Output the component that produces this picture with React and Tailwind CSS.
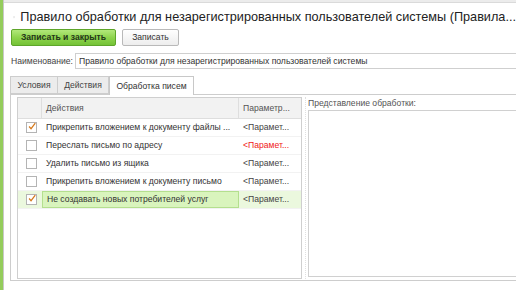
import { useState } from "react";

const rows = [
  { checked: true, name: "Прикрепить вложением к документу файлы ...", param: "<Парамет...", red: false },
  { checked: false, name: "Переслать письмо по адресу", param: "<Парамет...", red: true },
  { checked: false, name: "Удалить письмо из ящика", param: "<Парамет...", red: false },
  { checked: false, name: "Прикрепить вложением к документу письмо", param: "<Парамет...", red: false },
  { checked: true, name: "Не создавать новых потребителей услуг", param: "<Парамет...", red: false, selected: true },
];

function Check({ checked }) {
  return (
    <span className="w-[11px] h-[11px] border border-[#b4b4b4] bg-white flex items-center justify-center">
      {checked && (
        <svg width="11" height="11" viewBox="0 0 11 11" className="-mt-[3px] ml-[1px]">
          <path d="M1.5 5.5 L4.2 8.5 L10 0.8" stroke="#d67a1e" strokeWidth="1.7" fill="none" />
        </svg>
      )}
    </span>
  );
}

export default function App() {
  const [tab] = useState(2);
  const tabs = [
    { label: "Условия", w: "w-[48px]" },
    { label: "Действия", w: "w-[51px]" },
    { label: "Обработка писем", w: "w-[85px]" },
  ];

  return (
    <div className="flex w-[516px] h-[290px] overflow-hidden bg-white font-['Liberation_Sans',Arial,sans-serif] text-[8.6px] text-[#333]">
      {/* left edge of the outer app */}
      <div className="w-[3px] bg-[#94cc5c] shrink-0" />
      <div className="w-px bg-[#c8c8c8] shrink-0" />

      <div className="flex-1 flex flex-col min-w-0">
        <div className="h-[3px] bg-[#ececec] border-b border-[#dadada] shrink-0" />

        {/* Title */}
        <div className="h-[25px] pt-[3px] flex items-center pl-[9px] shrink-0">
          <svg width="12" height="12" viewBox="0 0 12 12" className="mr-[5px] -mt-[1px]">
            <path
              d="M6 0.8 L7.5 4.4 L11.3 4.6 L8.4 7.1 L9.3 10.9 L6 8.8 L2.7 10.9 L3.6 7.1 L0.7 4.6 L4.5 4.4 Z"
              fill="none"
              stroke="#b5b5b5"
              strokeWidth="0.9"
              strokeLinejoin="round"
            />
          </svg>
          <span className="text-[12.7px] text-[#222] whitespace-nowrap leading-none">
            Правило обработки для незарегистрированных пользователей системы (Правила...
          </span>
        </div>

        {/* Buttons */}
        <div className="flex gap-[6px] pl-[7px] mt-[1px] shrink-0">
          <button className="h-[17px] w-[105px] rounded-[2px] border border-[#5ea52a] bg-gradient-to-b from-[#b2e87a] via-[#8ed44c] to-[#74c236] font-bold text-[8.6px] text-[#24361a] leading-none whitespace-nowrap">
            Записать и закрыть
          </button>
          <button className="h-[17px] w-[57px] rounded-[2px] border border-[#b9b9b9] bg-gradient-to-b from-white to-[#ededed] text-[8.6px] text-[#333] leading-none">
            Записать
          </button>
        </div>

        {/* Name */}
        <div className="flex items-center pl-[7px] mt-[7px] shrink-0">
          <span className="text-[#444] w-[64px] whitespace-nowrap">Наименование:</span>
          <div className="flex-1 h-[16px] border border-[#cfcfcf] border-r-0 flex items-center pl-[3px] whitespace-nowrap overflow-hidden text-[#333]">
            Правило обработки для незарегистрированных пользователей системы
          </div>
        </div>

        {/* Tab panel */}
        <div className="flex flex-col ml-[6px] mt-[6px] flex-1 min-h-0 mb-[9px]">
          <div className="flex items-end h-[19px] shrink-0">
            {tabs.map((t, i) =>
              i === tab ? (
                <div
                  key={t.label}
                  className={`${t.w} h-[19px] flex items-center justify-center border border-b-0 border-[#c8c8c8] bg-white text-[#333] relative top-px`}
                >
                  {t.label}
                </div>
              ) : (
                <div
                  key={t.label}
                  className={`${t.w} h-[18px] flex items-center justify-center border border-[#cdcdcd] bg-[#ececec] text-[#444] ${i > 0 ? "border-l-0" : ""}`}
                >
                  {t.label}
                </div>
              )
            )}
          </div>

          <div className="flex-1 border border-r-0 border-[#cdcdcd] flex pt-[2px] pl-[6px] pb-px min-h-0">
            {/* Table */}
            <div className="w-[285px] border border-[#cfcfcf] flex flex-col shrink-0">
              <div className="flex h-[21px] bg-[#f2f2f2] border-b border-[#dedede] text-[#555] shrink-0">
                <div className="w-[24px] border-r border-[#dedede]" />
                <div className="w-[197px] pl-[4px] flex items-center border-r border-[#dedede]">Действия</div>
                <div className="flex-1 pl-[4px] flex items-center whitespace-nowrap">Параметр...</div>
              </div>
              {rows.map((r) => (
                <div
                  key={r.name}
                  className={`flex h-[18px] border-b border-[#f2f2f2] ${r.selected ? "bg-[#ebf8de]" : "bg-white"}`}
                >
                  <div className="w-[24px] flex items-center justify-center pl-[2px]">
                    <Check checked={r.checked} />
                  </div>
                  <div
                    className={`w-[197px] pl-[4px] flex items-center whitespace-nowrap overflow-hidden ${
                      r.selected ? "bg-[#d9f4bd] border border-[#b4df8e]" : ""
                    }`}
                  >
                    {r.name}
                  </div>
                  <div className={`flex-1 pl-[4px] flex items-center whitespace-nowrap ${r.red ? "text-[#f01818]" : "text-[#444]"}`}>
                    {r.param}
                  </div>
                </div>
              ))}
            </div>

            {/* splitter */}
            <div className="w-[6px] flex justify-center shrink-0">
              <div className="w-px border-l border-dotted border-[#e0e0e0]" />
            </div>

            {/* Right panel */}
            <div className="flex-1 flex flex-col min-w-0">
              <div className="h-[13px] leading-[13px] text-[#555] whitespace-nowrap">Представление обработки:</div>
              <div className="flex-1 border border-r-0 border-[#d0d0d0] bg-white mb-[2px]" />
            </div>
          </div>
        </div>
      </div>
    </div>
  );
}
